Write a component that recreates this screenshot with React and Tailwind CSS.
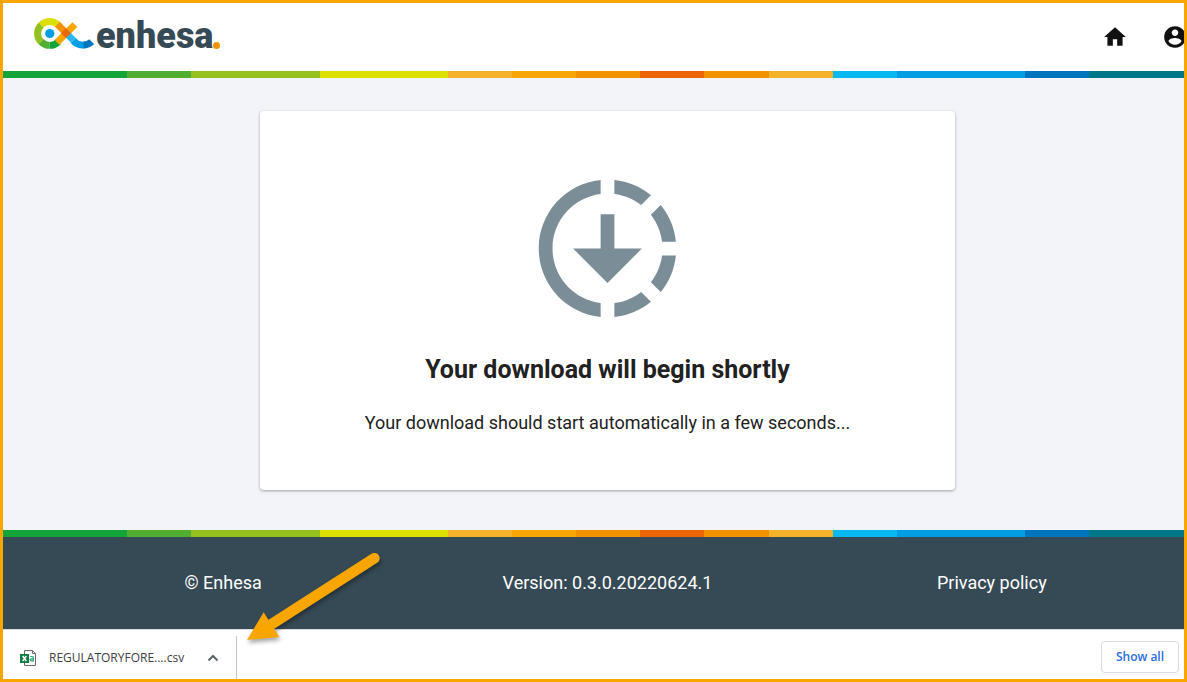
import { clsx } from "clsx";

const stripes = [
  "flex-[124] bg-[#13a538]",
  "flex-[64] bg-[#52ae32]",
  "flex-[129] bg-[#95c11f]",
  "flex-[128] bg-[#dddf00]",
  "flex-[64] bg-[#f3b229]",
  "flex-[64] bg-[#faa600]",
  "flex-[64] bg-[#f39200]",
  "flex-[64] bg-[#ec6608]",
  "flex-[65] bg-[#f39200]",
  "flex-[64] bg-[#f3b229]",
  "flex-[64] bg-[#09b9f2]",
  "flex-[128] bg-[#009fe3]",
  "flex-[64] bg-[#0075bf]",
  "flex-[95] bg-[#00788a]",
];

const StripeBar = () => (
  <div className="flex h-[7px] w-full" aria-hidden="true">
    {stripes.map((stripe, index) => (
      <span key={index} className={clsx("h-full", stripe)} />
    ))}
  </div>
);

const LogoMark = () => (
  <svg viewBox="38 34 183 100" className="mb-2 h-[33px] w-[61px]" fill="none" aria-hidden="true">
    <g strokeWidth="21">
      <path d="M62 58A36 36 0 0 0 62 110" stroke="#95c11f" />
      <path d="M62 109A36 36 0 0 0 88 120" stroke="#52ae32" />
      <path d="M88 120A36 36 0 0 0 114 109" stroke="#13a538" />
      <path d="M62 58A36 36 0 0 1 113 58" stroke="#dddf00" />
      <path d="M110 111L138 83" stroke="#faa600" />
      <path d="M138 83L164 57" stroke="#faa600" />
      <path d="M111 56L138 83" stroke="#f39200" />
      <path d="M138 83L147 92C153 98 159 106 166 111" stroke="#2ab9f0" />
      <path d="M160 107C169 116 179 120 192 119" stroke="#009fe3" />
      <path d="M190 119C201 119 209 115 215 109" stroke="#0075bf" />
    </g>
    <path d="M137 68L152 83L137 98L122 83Z" fill="#ec6608" />
    <circle cx="88" cy="84" r="14" fill="#009fe3" />
  </svg>
);

const HomeIcon = () => (
  <svg viewBox="0 0 24 24" className="size-[26px]" fill="currentColor" aria-hidden="true">
    <path d="M10 20v-6h4v6h5v-8h3L12 3 2 12h3v8z" />
  </svg>
);

const AccountIcon = () => (
  <svg viewBox="0 0 24 24" className="size-[26px]" fill="currentColor" aria-hidden="true">
    <path d="M12 2C6.480 2 2 6.480 2 12s4.480 10 10 10 10-4.480 10-10S17.520 2 12 2zm0 3c1.660 0 3 1.340 3 3s-1.340 3-3 3-3-1.340-3-3 1.340-3 3-3zm0 14.200c-2.500 0-4.710-1.280-6-3.220.03-1.990 4-3.080 6-3.080 1.990 0 5.970 1.090 6 3.080-1.290 1.940-3.500 3.220-6 3.220z" />
  </svg>
);

const DownloadingIcon = () => (
  <svg viewBox="0 0 24 24" className="size-[165px] text-[#7b8d96]" fill="currentColor" aria-hidden="true">
    <path d="M18.320 4.260C16.840 3.050 15.010 2.250 13 2.050v2.020c1.460.18 2.790.76 3.900 1.620l1.420-1.430z" />
    <path d="M19.930 11h2.020c-.2-2.010-1-3.840-2.210-5.320L18.310 7.100c.86 1.110 1.440 2.440 1.620 3.900z" />
    <path d="M18.310 16.900l1.430 1.430c1.210-1.480 2.010-3.320 2.210-5.320h-2.020c-.18 1.450-.76 2.780-1.620 3.890z" />
    <path d="M13 19.930v2.020c2.010-.2 3.840-1 5.320-2.210l-1.430-1.430c-1.100.86-2.430 1.440-3.890 1.620z" />
    <path d="M13 12V7h-2v5H7l5 5 5-5h-4z" />
    <path d="M11 21.950v-2.020c-3.950-.49-7-3.850-7-7.930s3.050-7.440 7-7.930V2.050C5.950 2.550 2 6.810 2 12s3.950 9.450 9 9.950z" />
  </svg>
);

const CsvIcon = () => (
  <svg viewBox="0 0 16 16" className="size-4" fill="none" aria-hidden="true">
    <path d="M4.500 4V.5h8L15.500 3.500v12h-11V12" fill="#fff" stroke="#6b6b6b" />
    <path d="M12.500.5v3h3" stroke="#6b6b6b" />
    <rect x="0" y="4" width="9" height="9" fill="#107c41" />
    <path d="M2.700 6l3.600 5M6.300 6l-3.600 5" stroke="#fff" strokeWidth="1.500" />
    <path d="M10.300 6.500h2q1 0 1 1v3.300h-2q-1.200 0-1.200-1t1.200-1h2" stroke="#21a366" strokeWidth="1.200" />
  </svg>
);

const PointerArrow = () => (
  <svg
    viewBox="729 90 420 300"
    className="pointer-events-none absolute -top-20 left-60 z-10 h-[100px] w-[140px] drop-shadow-[1px_3px_2px_rgba(0,0,0,0.35)]"
    aria-hidden="true"
  >
    <path d="M1123 115L805 319" stroke="#faa600" strokeWidth="32" strokeLinecap="round" />
    <path d="M741 360L791 277L838 351Z" fill="#faa600" />
  </svg>
);

const Header = () => (
  <header className="bg-white">
    <div className="flex h-[68px] items-center justify-between overflow-hidden pl-[30px]">
      <a href="#home" className="flex items-center" aria-label="enhesa home">
        <LogoMark />
        <span className="mb-[2px] ml-[2px] flex items-end">
          <span className="font-[Roboto,sans-serif] text-4xl font-black leading-[38px] text-[#364a55]">
            enhesa
          </span>
          <span className="mb-[6px] size-[7px] rounded-full bg-[#f39200]" />
        </span>
      </a>
      <nav className="-mr-1 flex items-center gap-[34px] text-[#111]">
        <a href="#home" aria-label="Home">
          <HomeIcon />
        </a>
        <button type="button" aria-label="Account">
          <AccountIcon />
        </button>
      </nav>
    </div>
    <StripeBar />
  </header>
);

const DownloadCard = () => (
  <section className="flex w-full max-w-[695px] flex-col items-center rounded-[4px] bg-white px-6 pt-[55px] pb-[54px] text-center text-[#212121] shadow-[0_1px_3px_rgba(0,0,0,0.35)]">
    <DownloadingIcon />
    <h1 className="mt-6 text-[25px] font-bold leading-[30px]">
      Your download will begin shortly
    </h1>
    <p className="mt-6 text-lg leading-[27px]">
      Your download should start automatically in a few seconds...
    </p>
  </section>
);

const Footer = () => (
  <footer>
    <StripeBar />
    <div className="grid h-[92px] grid-cols-3 items-center bg-[#364a55] pl-7 text-center text-lg text-white">
      <p>© Enhesa</p>
      <p>Version: 0.3.0.20220624.1</p>
      <a href="#privacy">Privacy policy</a>
    </div>
  </footer>
);

const DownloadShelf = () => (
  <div className="relative flex h-[50px] items-stretch justify-between border-t border-[#dadce0] bg-white pt-[6px] font-['Open_Sans',sans-serif]">
    <PointerArrow />
    <div className="flex items-center border-r border-[#c4c4c4] pr-[17px] pl-[17px]">
      <button type="button" className="flex items-center gap-[13px] text-xs text-[#3c4043]">
        <CsvIcon />
        REGULATORYFORE....csv
      </button>
      <button type="button" className="ml-[23px]" aria-label="More options">
        <svg viewBox="0 0 12 12" className="size-3" fill="none" stroke="#5f6368" strokeWidth="2" aria-hidden="true">
          <path d="M1.500 8.500L6 4l4.500 4.500" />
        </svg>
      </button>
    </div>
    <button
      type="button"
      className="mt-[5px] mr-[5px] h-8 w-[78px] rounded-[4px] border border-[#dadce0] text-xs font-semibold text-[#2b6de0]"
    >
      Show all
    </button>
  </div>
);

const App = () => (
  <div className="flex min-h-screen flex-col border-[3px] border-[#faa600] bg-[#f3f4f9] font-[Roboto,sans-serif]">
    <Header />
    <main className="flex flex-1 items-start justify-center pt-[33px] pb-10 pl-7">
      <DownloadCard />
    </main>
    <Footer />
    <DownloadShelf />
  </div>
);

export default App;
